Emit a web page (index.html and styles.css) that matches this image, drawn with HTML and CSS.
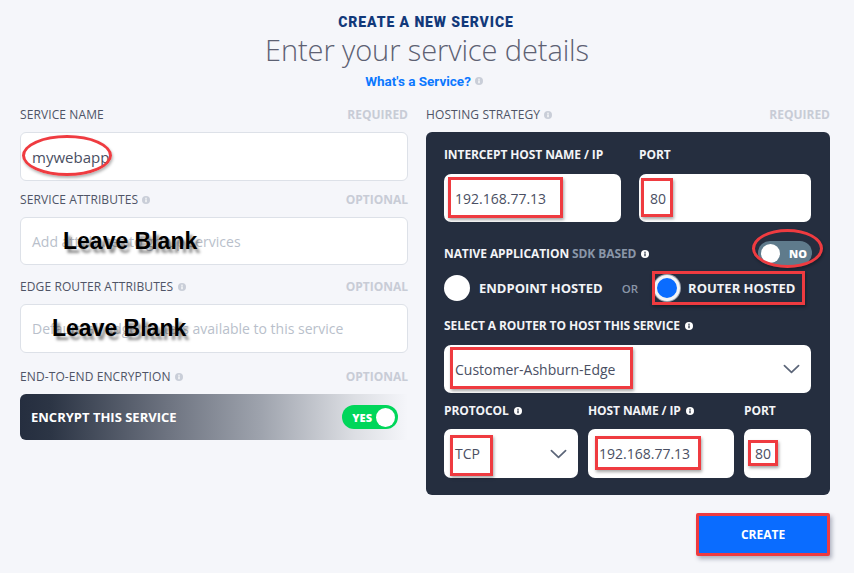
FILE: index.html
```html
<!DOCTYPE html>
<html>
<head>
<meta charset="utf-8">
<link rel="stylesheet" href="styles.css">
</head>
<body>
<div class="page">
  <header class="hero">
    <div class="eyebrow">CREATE A NEW SERVICE</div>
    <h1 class="title">Enter your service details</h1>
    <a class="help">What's a Service? <svg class="info" viewBox="0 0 10 10"><circle cx="5" cy="5" r="5" fill="#c9ced8"/><rect x="4.2" y="4.2" width="1.6" height="3.6" fill="#fff"/><circle cx="5" cy="2.7" r="0.9" fill="#fff"/></svg></a>
  </header>

  <main class="grid">
    <section class="col">
      <div class="field">
        <div class="label-row"><span class="label">SERVICE NAME</span><span class="req">REQUIRED</span></div>
        <div class="input"><span class="value big">mywebapp</span><span class="anno ellipse name-ellipse"></span></div>
      </div>
      <div class="field">
        <div class="label-row"><span class="label">SERVICE ATTRIBUTES <svg class="info" viewBox="0 0 10 10"><circle cx="5" cy="5" r="5" fill="#c9ced8"/><rect x="4.2" y="4.2" width="1.6" height="3.6" fill="#fff"/><circle cx="5" cy="2.7" r="0.9" fill="#fff"/></svg></span><span class="req">OPTIONAL</span></div>
        <div class="input"><span class="placeholder">Add attributes to group services</span><span class="blank blank-1">Leave Blank</span></div>
      </div>
      <div class="field">
        <div class="label-row"><span class="label">EDGE ROUTER ATTRIBUTES <svg class="info" viewBox="0 0 10 10"><circle cx="5" cy="5" r="5" fill="#c9ced8"/><rect x="4.2" y="4.2" width="1.6" height="3.6" fill="#fff"/><circle cx="5" cy="2.7" r="0.9" fill="#fff"/></svg></span><span class="req">OPTIONAL</span></div>
        <div class="input"><span class="placeholder">Default: all edge routers available to this service</span><span class="blank blank-2">Leave Blank</span></div>
      </div>
      <div class="field">
        <div class="label-row"><span class="label">END-TO-END ENCRYPTION <svg class="info" viewBox="0 0 10 10"><circle cx="5" cy="5" r="5" fill="#c9ced8"/><rect x="4.2" y="4.2" width="1.6" height="3.6" fill="#fff"/><circle cx="5" cy="2.7" r="0.9" fill="#fff"/></svg></span><span class="req">OPTIONAL</span></div>
        <div class="encrypt">
          <span class="encrypt-text">ENCRYPT THIS SERVICE</span>
          <span class="toggle yes"><span class="toggle-text">YES</span><span class="knob"></span></span>
        </div>
      </div>
    </section>

    <section class="col">
      <div class="label-row"><span class="label">HOSTING STRATEGY <svg class="info" viewBox="0 0 10 10"><circle cx="5" cy="5" r="5" fill="#c9ced8"/><rect x="4.2" y="4.2" width="1.6" height="3.6" fill="#fff"/><circle cx="5" cy="2.7" r="0.9" fill="#fff"/></svg></span><span class="req">REQUIRED</span></div>
      <div class="panel">
        <div class="row row-2">
          <div class="sub">
            <div class="dlabel">INTERCEPT HOST NAME / IP</div>
            <div class="input dark-input"><span class="value">192.168.77.13</span><span class="anno rect r-intercept"></span></div>
          </div>
          <div class="sub">
            <div class="dlabel">PORT</div>
            <div class="input dark-input"><span class="value">80</span><span class="anno rect r-port"></span></div>
          </div>
        </div>

        <div class="native-row">
          <span class="dlabel">NATIVE APPLICATION <span class="muted">SDK BASED</span> <svg class="info" viewBox="0 0 10 10"><circle cx="5" cy="5" r="5" fill="#ffffff"/><rect x="4.2" y="4.2" width="1.6" height="3.6" fill="#252e3f"/><circle cx="5" cy="2.7" r="0.9" fill="#252e3f"/></svg></span>
          <span class="toggle no"><span class="knob"></span><span class="toggle-text">NO</span><span class="anno ellipse no-ellipse"></span></span>
        </div>

        <div class="radio-row">
          <span class="radio-opt"><span class="radio"></span><span class="radio-text">ENDPOINT HOSTED</span></span>
          <span class="or">OR</span>
          <span class="radio-opt router"><span class="radio on"></span><span class="radio-text">ROUTER HOSTED</span><span class="anno rect r-router"></span></span>
        </div>

        <div class="dlabel">SELECT A ROUTER TO HOST THIS SERVICE <svg class="info" viewBox="0 0 10 10"><circle cx="5" cy="5" r="5" fill="#ffffff"/><rect x="4.2" y="4.2" width="1.6" height="3.6" fill="#252e3f"/><circle cx="5" cy="2.7" r="0.9" fill="#252e3f"/></svg></div>
        <div class="input dark-input select"><span class="value">Customer-Ashburn-Edge</span><svg class="chev" viewBox="0 0 18 10"><path d="M1.5 1.5 L9 8.5 L16.5 1.5" fill="none" stroke="#5b6578" stroke-width="1.8" stroke-linecap="round" stroke-linejoin="round"/></svg><span class="anno rect r-select"></span></div>

        <div class="row row-3">
          <div class="sub">
            <div class="dlabel">PROTOCOL <svg class="info" viewBox="0 0 10 10"><circle cx="5" cy="5" r="5" fill="#ffffff"/><rect x="4.2" y="4.2" width="1.6" height="3.6" fill="#252e3f"/><circle cx="5" cy="2.7" r="0.9" fill="#252e3f"/></svg></div>
            <div class="input dark-input select"><span class="value">TCP</span><svg class="chev" viewBox="0 0 18 10"><path d="M1.5 1.5 L9 8.5 L16.5 1.5" fill="none" stroke="#5b6578" stroke-width="1.8" stroke-linecap="round" stroke-linejoin="round"/></svg><span class="anno rect r-tcp"></span></div>
          </div>
          <div class="sub">
            <div class="dlabel">HOST NAME / IP <svg class="info" viewBox="0 0 10 10"><circle cx="5" cy="5" r="5" fill="#ffffff"/><rect x="4.2" y="4.2" width="1.6" height="3.6" fill="#252e3f"/><circle cx="5" cy="2.7" r="0.9" fill="#252e3f"/></svg></div>
            <div class="input dark-input"><span class="value">192.168.77.13</span><span class="anno rect r-host"></span></div>
          </div>
          <div class="sub">
            <div class="dlabel">PORT</div>
            <div class="input dark-input"><span class="value">80</span><span class="anno rect r-port2"></span></div>
          </div>
        </div>
      </div>
      <div class="actions"><button class="create">CREATE</button></div>
    </section>
  </main>
</div>
</body>
</html>
```

FILE: styles.css
```css
* { box-sizing: border-box; }
html, body { margin: 0; padding: 0; }
body {
  background: #f5f6fa;
  font-family: "Open Sans", "Liberation Sans", sans-serif;
  color: #4f5466;
  width: 854px;
  height: 573px;
  overflow: hidden;
}
.page { padding-top: 13px; }

.hero { text-align: center; }
.eyebrow {
  font-family: Roboto, "Liberation Sans", sans-serif;
  font-weight: 900;
  font-size: 14px;
  line-height: 18px;
  letter-spacing: 0.9px;
  color: #12397a;
  margin-left: -2px;
}
.title {
  margin: 0;
  font-family: "Open Sans", sans-serif;
  font-weight: 300;
  font-size: 29px;
  line-height: 38px;
  letter-spacing: -0.1px;
  color: #5d6173;
}
.help {
  display: inline-flex;
  align-items: center;
  gap: 3px;
  font-family: Roboto, sans-serif;
  font-weight: 700;
  font-size: 13.5px;
  line-height: 18px;
  color: #0b78ff;
  margin-top: -3px;
  margin-left: -6px;
}
.info { width: 8px; height: 8px; vertical-align: 0px; margin-left: 1px; }

.grid {
  display: grid;
  grid-template-columns: 388px 404px;
  column-gap: 18px;
  padding-left: 20px;
  margin-top: 14px;
}

.field { margin-bottom: 10px; }
.label-row {
  display: flex;
  justify-content: space-between;
  align-items: center;
  height: 18px;
  margin-bottom: 9px;
}
.label { font-size: 12px; color: #4f5466; letter-spacing: 0.1px; }
.req { font-size: 12px; font-weight: 700; color: #c8ccd6; }

.input {
  position: relative;
  display: flex;
  align-items: center;
  height: 49px;
  padding: 0 11px;
  background: #fff;
  border: 1px solid #dde1e8;
  border-radius: 6px;
}
.value { font-size: 14px; color: #4a4f63; }
.value.big { font-size: 15px; }
.placeholder { font-size: 14px; color: #b9bfcb; }
.field:nth-child(2) { margin-top: -1px; }
.field:nth-child(2) .input { height: 48px; }
.field:nth-child(3) { margin-top: 12px; }
.field:nth-child(4) { margin-top: 14px; }

.blank {
  position: absolute;
  font-family: "Liberation Sans", Arial, sans-serif;
  font-weight: 700;
  font-size: 23px;
  line-height: 30px;
  color: #000;
  text-shadow: 3px 4px 3px rgba(0,0,0,0.45);
}
.blank-1 { left: 42px; top: 8px; }
.blank-2 { left: 31px; top: 8px; }

.encrypt {
  display: flex;
  align-items: center;
  justify-content: space-between;
  height: 46px;
  padding: 0 10px 0 11px;
  border-radius: 6px 0 0 6px;
  background: linear-gradient(90deg, #252e3f 0%, #2c3545 8%, #6d7380 38%, #9ea3ad 62%, #dcdee3 86%, #f5f6fa 100%);
}
.encrypt-text { color: #fff; font-weight: 700; font-size: 13px; }

.toggle {
  position: relative;
  display: inline-flex;
  align-items: center;
  height: 24px;
  border-radius: 12px;
  padding: 0 3px;
  gap: 4px;
}
.toggle.yes { width: 56px; background: #00d65a; justify-content: flex-end; }
.toggle.no { width: 54px; background: #5f7b8c; justify-content: flex-start; }
.toggle-text { color: #fff; font-weight: 800; font-size: 11px; }
.knob { width: 19px; height: 19px; border-radius: 50%; background: #fff; }
.toggle.no .toggle-text { margin-left: 5px; }

.panel {
  background: #252e3f;
  border-radius: 6px;
  padding: 14px 19px 17px 18px;
}
.dlabel {
  color: #f3f4f7;
  font-weight: 700;
  font-size: 12px;
  line-height: 18px;
  margin-bottom: 10px;
  letter-spacing: -0.1px;
}
.dlabel .info { margin-left: 2px; }
.muted { color: #8a96a8; }
.dark-input { border: none; border-radius: 7px; height: 48px; }
.row { display: grid; }
.row-2 { grid-template-columns: 177px 1fr; column-gap: 18px; }
.row-3 { grid-template-columns: 134px 146px 1fr; column-gap: 10px; margin-top: 9px; }
.row-3 .dark-input { height: 49px; }
.row-3 .dlabel { margin-bottom: 9px; }
.select { justify-content: space-between; }
.select .chev { width: 17px; height: 10px; margin-right: 0; }

.native-row {
  display: flex;
  align-items: center;
  justify-content: space-between;
  margin-top: 19px;
  height: 24px;
}
.native-row .dlabel { margin-bottom: 0; margin-top: 1px; }
.native-row .toggle { margin-right: -1px; }

.radio-row {
  display: flex;
  align-items: center;
  height: 26px;
  margin-top: 10px;
  margin-bottom: 16px;
}
.radio-opt { position: relative; display: inline-flex; align-items: center; }
.radio { width: 26px; height: 26px; border-radius: 50%; background: #fff; }
.radio.on {
  background: #0a6cff;
  border: 3px solid #f3f4f6;
  box-shadow: 0 0 0 1px #9ca3ae;
}
.radio-text { color: #f3f4f7; font-weight: 700; font-size: 13px; margin-left: 9px; }
.router .radio-text { margin-left: 8px; }
.or { color: #8a96a8; font-weight: 600; font-size: 11.5px; margin-left: 19px; margin-right: 17px; }
.router { margin-left: -1px; }

.actions { display: flex; justify-content: flex-end; margin-top: 18px; }
.create {
  width: 134px;
  height: 43px;
  background: #0a6cff;
  border: 3px solid #ef3b40;
  border-radius: 2px;
  color: #fff;
  font-family: "Open Sans", sans-serif;
  font-weight: 700;
  font-size: 12px;
  box-shadow: 2px 3px 4px rgba(40,50,80,0.35);
}

/* annotations */
.anno { position: absolute; pointer-events: none; }
.anno.rect { border: 3px solid #ef3b40; box-shadow: 1px 2px 3px rgba(0,0,0,0.35); }
.anno.ellipse { border: 3px solid #ef3b40; border-radius: 50%; box-shadow: 1px 2px 3px rgba(0,0,0,0.3); }
.name-ellipse { left: 1px; top: 2px; width: 90px; height: 41px; }
.r-intercept { left: 4px; top: 3px; width: 115px; height: 41px; }
.r-port { left: 2px; top: 4px; width: 32px; height: 39px; }
.no-ellipse { left: -6px; top: -12px; width: 71px; height: 39px; }
.r-router { left: -2px; top: -4px; width: 153px; height: 34px; }
.r-select { left: 6px; top: 2px; width: 183px; height: 42px; }
.r-tcp { left: 6px; top: 6px; width: 43px; height: 41px; }
.r-host { left: 7px; top: 7px; width: 106px; height: 34px; }
.r-port2 { left: 4px; top: 11px; width: 30px; height: 26px; }
```
